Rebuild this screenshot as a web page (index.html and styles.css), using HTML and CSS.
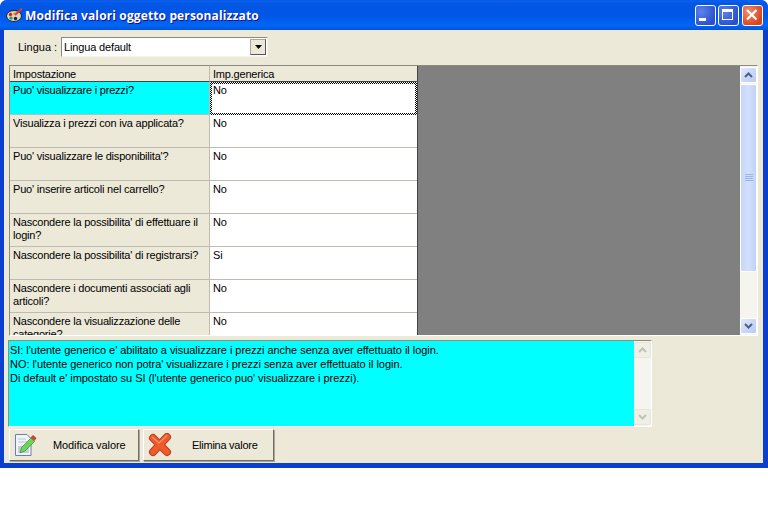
FILE: index.html
```html
<!DOCTYPE html>
<html lang="it">
<head>
  <meta charset="UTF-8" />
  <title>Modifica valori oggetto personalizzato</title>
  <link rel="stylesheet" href="styles.css">
</head>
<body>
  <div class="window">
    <header class="titlebar">
      <svg class="app-icon" width="18" height="16" viewBox="0 0 18 16">
        <ellipse cx="8" cy="9" rx="7.5" ry="5.5" fill="#d8d6c8" stroke="#1c2430"/>
        <circle cx="4.5" cy="7.5" r="1.7" fill="#c22"/>
        <circle cx="8.5" cy="6.5" r="1.5" fill="#e8b020"/>
        <circle cx="5" cy="11" r="1.6" fill="#2a9a50"/>
        <circle cx="9.5" cy="11.5" r="1.7" fill="#1c2430"/>
        <path d="M9 8 L16 1.5" stroke="#e03a30" stroke-width="2"/>
      </svg>
      <span class="title">Modifica valori oggetto personalizzato</span>
      <div class="caption-buttons">
        <div class="cap-btn">
          <svg width="21" height="21" viewBox="0 0 21 21"><rect x="4" y="13" width="7" height="3" fill="#fff"/></svg>
        </div>
        <div class="cap-btn">
          <svg width="21" height="21" viewBox="0 0 21 21"><rect x="4.5" y="4.5" width="10" height="10" fill="none" stroke="#fff"/><rect x="4" y="4" width="11" height="3" fill="#fff"/></svg>
        </div>
        <div class="cap-btn cap-close">
          <svg width="21" height="21" viewBox="0 0 21 21"><path d="M5 5 L14.5 14.5 M14.5 5 L5 14.5" stroke="#fff" stroke-width="2.2"/></svg>
        </div>
      </div>
    </header>

    <main class="content">
      <div class="lang-row">
        <label>Lingua :</label>
        <div class="combo">
          <span>Lingua default</span>
          <div class="combo-btn"><svg width="7" height="4" viewBox="0 0 7 4"><path d="M0 0 H7 L3.5 4 Z" fill="#000"/></svg></div>
        </div>
      </div>

      <div class="grid">
        <div class="table">
          <div class="row head">
            <div class="cell c1">Impostazione</div>
            <div class="cell c2">Imp.generica</div>
          </div>
          <div class="row sel">
            <div class="cell c1">Puo' visualizzare i prezzi?</div>
            <div class="cell c2 focus"><div>No</div></div>
          </div>
          <div class="row">
            <div class="cell c1">Visualizza i prezzi con iva applicata?</div>
            <div class="cell c2">No</div>
          </div>
          <div class="row">
            <div class="cell c1">Puo' visualizzare le disponibilita'?</div>
            <div class="cell c2">No</div>
          </div>
          <div class="row">
            <div class="cell c1">Puo' inserire articoli nel carrello?</div>
            <div class="cell c2">No</div>
          </div>
          <div class="row">
            <div class="cell c1">Nascondere la possibilita' di effettuare il login?</div>
            <div class="cell c2">No</div>
          </div>
          <div class="row">
            <div class="cell c1">Nascondere la possibilita' di registrarsi?</div>
            <div class="cell c2">Si</div>
          </div>
          <div class="row">
            <div class="cell c1">Nascondere i documenti associati agli articoli?</div>
            <div class="cell c2">No</div>
          </div>
          <div class="row">
            <div class="cell c1">Nascondere la visualizzazione delle categorie?</div>
            <div class="cell c2">No</div>
          </div>
        </div>
        <div class="filler"></div>
        <div class="vscroll">
          <div class="sb-btn"><svg width="9" height="6" viewBox="0 0 9 6"><path d="M1 5 L4.5 1.5 L8 5" fill="none" stroke="#4d6185" stroke-width="2"/></svg></div>
          <div class="sb-thumb">
            <svg width="8" height="8" viewBox="0 0 8 8"><path d="M0 .5 H8 M0 2.5 H8 M0 4.5 H8 M0 6.5 H8" stroke="#9db4e8"/></svg>
          </div>
          <div class="sb-track"></div>
          <div class="sb-btn"><svg width="9" height="6" viewBox="0 0 9 6"><path d="M1 1 L4.5 4.5 L8 1" fill="none" stroke="#4d6185" stroke-width="2"/></svg></div>
        </div>
      </div>

      <div class="memo">
        <div class="memo-text">
          <p>SI: l'utente generico e' abilitato a visualizzare i prezzi anche senza aver effettuato il login.</p>
          <p>NO: l'utente generico non potra' visualizzare i prezzi senza aver effettuato il login.</p>
          <p>Di default e' impostato su SI (l'utente generico puo' visualizzare i prezzi).</p>
        </div>
        <div class="vscroll off">
          <div class="sb-btn"><svg width="9" height="6" viewBox="0 0 9 6"><path d="M1 5 L4.5 1.5 L8 5" fill="none" stroke="#c4c2b8" stroke-width="2"/></svg></div>
          <div class="sb-track"></div>
          <div class="sb-btn"><svg width="9" height="6" viewBox="0 0 9 6"><path d="M1 1 L4.5 4.5 L8 1" fill="none" stroke="#c4c2b8" stroke-width="2"/></svg></div>
        </div>
      </div>

      <div class="actions">
        <div class="btn btn-edit">
          <svg width="24" height="24" viewBox="0 0 24 24">
            <path d="M1.5 1.5 H13 L17 5.5 V22.5 H1.5 Z" fill="#f2f4fb" stroke="#6f80a8"/>
            <path d="M4 6 H12 M4 9 H14" stroke="#b9c3dc"/>
            <rect x="4" y="13" width="11" height="7" fill="#c4cde0"/>
            <path d="M6 20 L7.5 14.5 L17 5 L20.5 8.5 L11 18 Z" fill="#6fd35a" stroke="#3f9a36" stroke-width=".8"/>
            <path d="M16.5 4.5 L19 2 L22.5 5 L20.5 8 Z" fill="#c8453a"/>
          </svg>
          <span>Modifica valore</span>
        </div>
        <div class="btn btn-del">
          <svg width="24" height="24" viewBox="0 0 24 24">
            <path d="M5 5 L19 19 M19 4 L5 19" stroke="#bf3d1a" stroke-width="8" stroke-linecap="round"/>
            <path d="M5 5 L19 19 M19 4 L5 19" stroke="#ee5a2c" stroke-width="6" stroke-linecap="round"/>
            <path d="M4 4 L11 10 L19 2.5" fill="none" stroke="#fa9678" stroke-width="1.2"/>
          </svg>
          <span>Elimina valore</span>
        </div>
      </div>
    </main>
  </div>
</body>
</html>
```

FILE: styles.css
```css
* {
  box-sizing: border-box;
}

body {
  margin: 0;
  background: #fff;
  font-family: "Liberation Sans", Arial, sans-serif;
  font-size: 11px;
  color: #000;
}

p {
  margin: 0;
}

/* window frame */
.window {
  width: 768px;
  height: 468px;
  display: flex;
  flex-direction: column;
  background: #0a3fd0;
  border-radius: 7px 7px 0 0;
  overflow: hidden;
}

.titlebar {
  height: 30px;
  flex: none;
  display: flex;
  align-items: center;
  padding: 0 5px 0 6px;
  background: linear-gradient(#0a5be0 0, #0a5ff0 4%, #0258e4 12%, #0055e5 50%, #0066f5 85%, #0053d8 100%);
}

.app-icon {
  flex: none;
}

.title {
  margin-left: 1px;
  padding-top: 1px;
  font-family: "Open Sans", sans-serif;
  font-size: 12px;
  font-weight: bold;
  letter-spacing: 0.13px;
  color: #fff;
  text-shadow: 1px 1px #0f1089;
}

.caption-buttons {
  margin-left: auto;
  display: flex;
  gap: 2px;
}

.cap-btn {
  width: 21px;
  height: 21px;
  border: 1px solid #fff;
  border-radius: 3px;
  background: radial-gradient(circle at 30% 30%, #5d83e8, #2a50d0 75%);
  display: flex;
  align-items: center;
  justify-content: center;
}

.cap-btn svg {
  flex: none;
}

.cap-close {
  margin-left: 1px;
  background: radial-gradient(circle at 30% 30%, #ef8f6c, #d8431e 75%);
}

.content {
  flex: 1;
  margin: 0 5px 5px 4px;
  padding: 7px 0 0 4px;
  background: #ece9d8;
  display: flex;
  flex-direction: column;
}

/* language row */
.lang-row {
  display: flex;
  align-items: center;
  height: 20px;
  padding-left: 10px;
}

.lang-row label {
  width: 43px;
}

.combo {
  width: 207px;
  height: 20px;
  display: flex;
  align-items: center;
  justify-content: space-between;
  padding: 0 1px 0 2px;
  letter-spacing: -0.15px;
  background: #fff;
  border: 1px solid #7f9db9;
  border-color: #8d8b80 #f4f3ec #f4f3ec #8d8b80;
}

.combo-btn {
  width: 16px;
  height: 16px;
  display: flex;
  align-items: center;
  justify-content: center;
  background: #ece9d8;
  border: 1px solid #aca899;
  border-right-color: #555;
  border-bottom-color: #555;
}

/* settings grid */
.grid {
  width: 749px;
  height: 271px;
  margin-top: 8px;
  margin-left: 1px;
  display: flex;
  overflow: hidden;
  border: 1px solid #8d8b80;
  border-right-color: #fff;
  border-bottom-color: #fff;
}

.table {
  width: 408px;
  flex: none;
  border-right: 1px solid #444;
  letter-spacing: -0.2px;
}

.row {
  height: 33px;
  display: flex;
}

.cell {
  padding: 2px 3px 0;
  line-height: 13px;
  border-bottom: 1px solid #bdbcb2;
}

.c1 {
  width: 200px;
  flex: none;
  background: #ece9d8;
  border-right: 1px solid #bdbcb2;
}

.c2 {
  flex: 1;
  background: #fff;
}

.head {
  height: 16px;
}

.head .cell {
  background: #ece9d8;
  border-bottom: 1px solid #444;
}

.sel .c1 {
  background: #00ffff;
}

.focus {
  padding: 2px;
  border: 0;
  background: repeating-conic-gradient(#000 0 25%, #fff 0 50%) 0 0 / 2px 2px;
}

.focus div {
  height: 100%;
  padding: 0 1px;
  background: #fff;
}

.filler {
  flex: 1;
  background: #808080;
}

/* scrollbars */
.vscroll {
  width: 17px;
  flex: none;
  display: flex;
  flex-direction: column;
  gap: 1px;
  background: #f5f4ee;
  padding: 1px 0;
}

.sb-btn {
  height: 16px;
  flex: none;
  display: flex;
  align-items: center;
  justify-content: center;
  border: 1px solid #fff;
  border-radius: 2px;
  background: linear-gradient(135deg, #dfe8fd, #b6caf5);
}

.sb-thumb {
  height: 188px;
  flex: none;
  display: flex;
  align-items: center;
  justify-content: center;
  border: 1px solid #fff;
  border-radius: 2px;
  background: linear-gradient(90deg, #c6d6fb, #d2e0fd 50%, #c0d1f9);
}

.sb-track {
  flex: 1;
}

.off .sb-btn {
  border-color: #e8e6da;
  background: #f0efe6;
}

/* description box */
.memo {
  width: 644px;
  height: 87px;
  margin-top: 4px;
  display: flex;
  border: 1px solid #8d8b80;
  border-right-color: #fff;
  border-bottom-color: #fff;
}

.memo-text {
  flex: 1;
  padding: 2px 1px;
  line-height: 14px;
  letter-spacing: -0.04px;
  background: #00ffff;
}

/* bottom buttons */
.actions {
  display: flex;
  gap: 4px;
  margin-top: 2px;
  margin-left: 1px;
}

.btn {
  height: 32px;
  display: flex;
  align-items: center;
  padding-left: 4px;
  background: #ece9d8;
  border: 1px solid #fff;
  border-right-color: #716f64;
  border-bottom-color: #716f64;
  box-shadow: 1px 1px #aca899;
}

.btn svg {
  flex: none;
}

.btn-edit {
  width: 130px;
  letter-spacing: -0.1px;
}

.btn-edit span {
  margin-left: 15px;
}

.btn-del {
  width: 131px;
  letter-spacing: -0.25px;
}

.btn-del span {
  margin-left: 20px;
}
```
